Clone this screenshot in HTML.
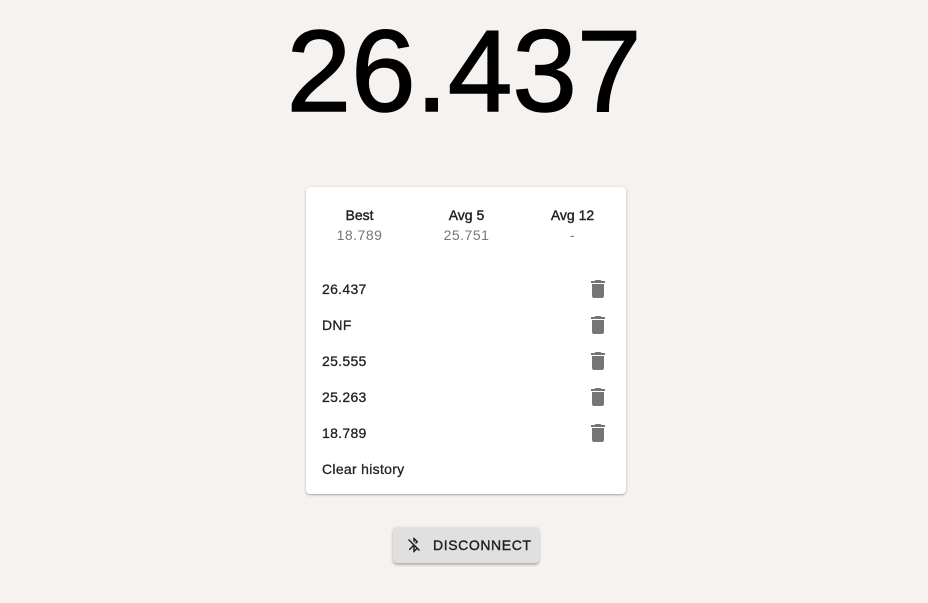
<!DOCTYPE html>
<html><head><style>
body{margin:0;width:928px;height:603px;background:#f5f2ef;font-family:"Liberation Sans",Roboto,sans-serif;position:relative;overflow:hidden}
.big{position:absolute;top:3px;left:0;width:928px;text-align:center;font-size:116px;line-height:136px;color:#000;-webkit-text-stroke:1.5px #000}
.card{position:absolute;left:306px;top:187px;width:320px;height:307px;background:#fff;border-radius:4px;box-shadow:0 1px 3px rgba(0,0,0,.2),0 1px 1px rgba(0,0,0,.14)}
.stat{position:absolute;top:18px;width:107px;text-align:center;font-size:14px;line-height:20px}
.stat b{color:#222;display:block;font-weight:normal;-webkit-text-stroke:.4px #222}
.stat span{color:#777;letter-spacing:.5px}
.row{position:absolute;left:16px;font-size:14px;color:#222;letter-spacing:.3px;-webkit-text-stroke:.3px #222}
.ic{position:absolute;left:280px;width:24px;height:24px}
.btn{position:absolute;left:393px;top:527px;width:146px;height:36px;background:#e0e0e0;border-radius:4px;box-shadow:0 2px 2px rgba(0,0,0,.2),0 1px 4px rgba(0,0,0,.12);font-size:14px;letter-spacing:.6px;color:#222;-webkit-text-stroke:.4px #222}
</style></head><body>
<div class="big">26.437</div>
<div class="card">
<div class="stat" style="left:0"><b>Best</b><span>18.789</span></div>
<div class="stat" style="left:107px"><b>Avg 5</b><span>25.751</span></div>
<div class="stat" style="left:213px"><b>Avg 12</b><span>-</span></div>
<div class="row" style="top:94px">26.437</div>
<div class="row" style="top:130px">DNF</div>
<div class="row" style="top:166px">25.555</div>
<div class="row" style="top:202px">25.263</div>
<div class="row" style="top:238px">18.789</div>
<div class="row" style="top:274px">Clear history</div>
<svg class="ic" style="top:90px" viewBox="0 0 24 24"><path fill="#757575" d="M6 19c0 1.1.9 2 2 2h8c1.1 0 2-.9 2-2V7H6v12zM19 4h-3.5l-1-1h-5l-1 1H5v2h14V4z"/></svg>
<svg class="ic" style="top:126px" viewBox="0 0 24 24"><path fill="#757575" d="M6 19c0 1.1.9 2 2 2h8c1.1 0 2-.9 2-2V7H6v12zM19 4h-3.5l-1-1h-5l-1 1H5v2h14V4z"/></svg>
<svg class="ic" style="top:162px" viewBox="0 0 24 24"><path fill="#757575" d="M6 19c0 1.1.9 2 2 2h8c1.1 0 2-.9 2-2V7H6v12zM19 4h-3.5l-1-1h-5l-1 1H5v2h14V4z"/></svg>
<svg class="ic" style="top:198px" viewBox="0 0 24 24"><path fill="#757575" d="M6 19c0 1.1.9 2 2 2h8c1.1 0 2-.9 2-2V7H6v12zM19 4h-3.5l-1-1h-5l-1 1H5v2h14V4z"/></svg>
<svg class="ic" style="top:234px" viewBox="0 0 24 24"><path fill="#757575" d="M6 19c0 1.1.9 2 2 2h8c1.1 0 2-.9 2-2V7H6v12zM19 4h-3.5l-1-1h-5l-1 1H5v2h14V4z"/></svg>
</div>
<div class="btn">
<svg style="position:absolute;left:12px;top:9px" width="18" height="18" viewBox="0 0 24 24"><path fill="#222" d="M13 5.83l1.88 1.88-1.6 1.6 1.41 1.41 3.02-3.02L12 2h-1v5.03l2 2v-3.2zM5.41 4L4 5.41 10.59 12 5 17.59 6.41 19 11 14.41V22h1l4.29-4.29 2.3 2.29L20 18.59 5.41 4zM13 18.17v-3.76l1.88 1.88L13 18.17z"/></svg>
<span style="position:absolute;left:40px;top:10px">DISCONNECT</span>
</div>
</body></html>
